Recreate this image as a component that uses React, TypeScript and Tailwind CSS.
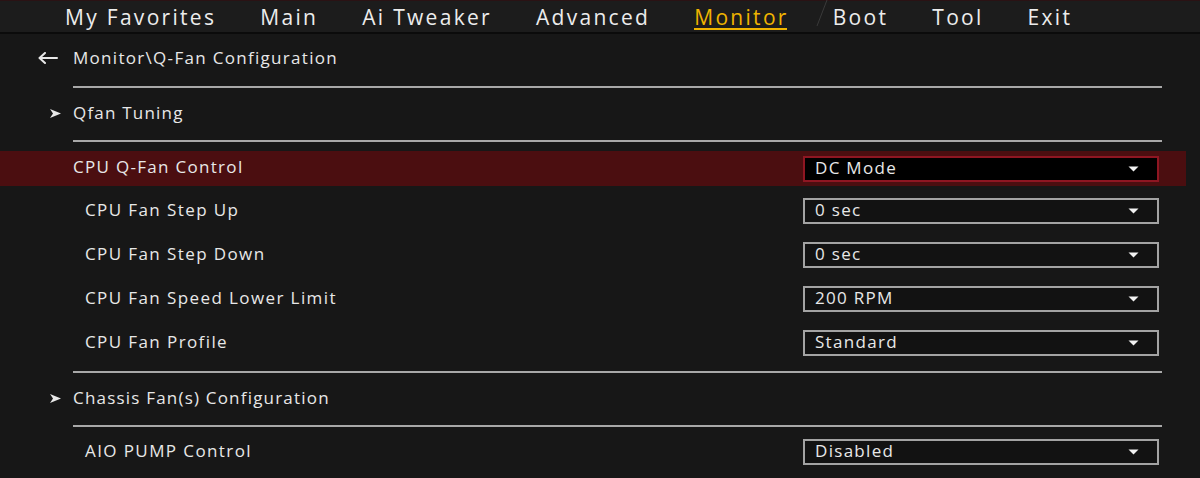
import React from "react";

const tabs = ["My Favorites", "Main", "Ai Tweaker", "Advanced", "Monitor", "Boot", "Tool", "Exit"];

function Caret() {
  return (
    <svg width="11" height="6" viewBox="0 0 11 6" className="shrink-0">
      <path d="M0.5 0.5 L10.5 0.5 L5.5 5.5 Z" fill="#f2f2f2" />
    </svg>
  );
}

function Dropdown({ value, active }: { value: string; active?: boolean }) {
  return (
    <div
      className={
        active
          ? "w-[356px] h-[26px] border-2 border-[#8e1622] bg-black flex items-center pl-[10px] pr-[18px] justify-between"
          : "w-[356px] h-[26px] border-2 border-[#a3a3a3] bg-[#121212] flex items-center pl-[10px] pr-[18px] justify-between"
      }
    >
      <span className="text-[17px] leading-none tracking-[1.3px] text-[#e8e8e8] -mt-[3px]">{value}</span>
      <Caret />
    </div>
  );
}

function Divider() {
  return <div className="ml-[73px] w-[1089px] h-[2px] bg-[#a8a8a8]" />;
}

function Section({ label }: { label: string }) {
  return (
    <div className="h-[52px] flex items-center">
      <svg width="11" height="9" viewBox="0 0 11 9" className="ml-[50px] mr-[12px] -mt-[2px]">
        <path d="M0 0 L11 4.5 L0 9 L3 4.5 Z" fill="#e8e8e8" />
      </svg>
      <span className="text-[17px] tracking-[1.2px] text-[#e8e8e8] leading-none -mt-[4px]">{label}</span>
    </div>
  );
}

function SubRow({ label, value }: { label: string; value: string }) {
  return (
    <div className="h-[44px] flex items-center">
      <span className="pl-[85px] text-[17px] tracking-[1.4px] text-[#e8e8e8] leading-none -mt-[3px]">{label}</span>
      <div className="ml-auto mr-[27px]">
        <Dropdown value={value} />
      </div>
    </div>
  );
}

export default function App() {
  return (
    <div
      className="w-[1200px] h-[478px] bg-[#171717] overflow-hidden flex flex-col"
      style={{ fontFamily: '"Open Sans", "Noto Sans", sans-serif' }}
    >
      {/* header */}
      <div className="relative h-[34px] shrink-0 bg-[#1c1c1c] border-b-2 border-[#0b0b0b] flex items-start pl-[65px] gap-[44px]">
        <div className="absolute top-0 left-0 right-0 h-px bg-[#2a1214]" />
        <svg className="absolute left-[815px] top-0" width="14" height="26" viewBox="0 0 14 26">
          <line x1="12" y1="0" x2="2" y2="26" stroke="#3a3a3a" strokeWidth="1" />
        </svg>
        {tabs.map((t) => (
          <div key={t} className="relative pt-[5px]">
            <span
              className={
                t === "Monitor"
                  ? "text-[21px] leading-[24px] tracking-[2.3px] text-[#f0b400]"
                  : "text-[21px] leading-[24px] tracking-[2.3px] text-[#ececec]"
              }
            >
              {t}
            </span>
            {t === "Monitor" && <div className="absolute left-0 right-[2px] top-[28px] h-[2px] bg-[#f0b400]" />}
          </div>
        ))}
      </div>

      <div className="w-[1186px] flex flex-col">
        {/* breadcrumb */}
        <div className="h-[52px] flex items-start pt-[14px]">
          <svg width="20" height="12" viewBox="0 0 20 12" className="ml-[38px] mr-[15px] mt-[4px]">
            <path d="M19 6 H2 M7 1 L1.5 6 L7 11" stroke="#e8e8e8" strokeWidth="2" fill="none" strokeLinecap="round" strokeLinejoin="round" />
          </svg>
          <span className="text-[17px] leading-[20px] tracking-[1.3px] text-[#e8e8e8]">Monitor\Q-Fan Configuration</span>
        </div>
        <Divider />
        <Section label="Qfan Tuning" />
        <Divider />

        {/* highlighted row */}
        <div className="mt-[9px] h-[35px] bg-[#4b0e10] flex items-center">
          <span className="pl-[73px] text-[17px] tracking-[1.3px] text-[#e8e8e8] leading-none -mt-[5px]">CPU Q-Fan Control</span>
          <div className="ml-auto mr-[27px]">
            <Dropdown value="DC Mode" active />
          </div>
        </div>

        <div className="mt-[3px] flex flex-col">
          <SubRow label="CPU Fan Step Up" value="0 sec" />
          <SubRow label="CPU Fan Step Down" value="0 sec" />
          <SubRow label="CPU Fan Speed Lower Limit" value="200 RPM" />
          <SubRow label="CPU Fan Profile" value="Standard" />
        </div>

        <div className="mt-[6px]">
          <Divider />
        </div>
        <Section label="Chassis Fan(s) Configuration" />
        <Divider />
        <div className="mt-[3px]">
          <SubRow label="AIO PUMP Control" value="Disabled" />
        </div>
      </div>
    </div>
  );
}
